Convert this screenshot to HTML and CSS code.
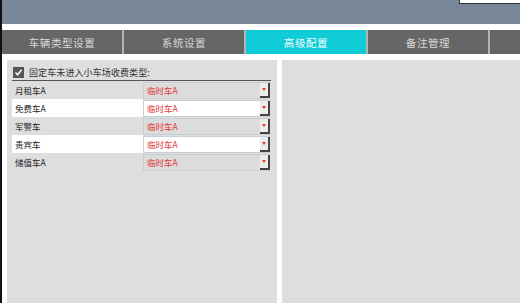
FILE: index.html
```html
<!DOCTYPE html>
<html lang="zh">
<head>
<meta charset="utf-8">
<link rel="stylesheet" href="styles.css">
</head>
<body>
<div class="app">
  <div class="header"><div class="topbox"></div></div>
  <div class="tabs">
    <div class="tab">车辆类型设置</div>
    <div class="tab">系统设置</div>
    <div class="tab active">高级配置</div>
    <div class="tab">备注管理</div>
    <div class="tab"></div>
  </div>
  <div class="content">
    <div class="panel left">
      <div class="checkrow">
        <span class="checkbox"><svg width="9" height="9" viewBox="0 0 9 9"><path d="M1.5 4.6 L3.6 6.8 L7.6 1.8" fill="none" stroke="#fff" stroke-width="1.5"/></svg></span>
        <span class="checktext">固定车未进入小车场收费类型:</span>
      </div>
      <div class="table">
        <div class="row"><div class="label">月租车A</div><div class="select"><span class="val">临时车A</span><span class="btn"><i class="tri"></i></span></div></div>
        <div class="row alt"><div class="label">免费车A</div><div class="select"><span class="val">临时车A</span><span class="btn"><i class="tri"></i></span></div></div>
        <div class="row"><div class="label">军警车</div><div class="select"><span class="val">临时车A</span><span class="btn"><i class="tri"></i></span></div></div>
        <div class="row alt"><div class="label">贵宾车</div><div class="select"><span class="val">临时车A</span><span class="btn"><i class="tri"></i></span></div></div>
        <div class="row"><div class="label">储值车A</div><div class="select"><span class="val">临时车A</span><span class="btn"><i class="tri"></i></span></div></div>
      </div>
    </div>
    <div class="panel right"></div>
  </div>
</div>
</body>
</html>
```

FILE: styles.css
```css
* { box-sizing: border-box; }
html, body { margin: 0; padding: 0; background: #fff; }
body { font-family: "Noto Sans CJK SC", "Noto Sans", sans-serif; }
.app {
  width: 520px;
  height: 303px;
  border-left: 2px solid #111;
  display: flex;
  flex-direction: column;
  overflow: hidden;
}
.header {
  height: 24px;
  background: #778797;
  display: flex;
  justify-content: flex-end;
  align-items: flex-start;
}
.topbox {
  width: 61px;
  height: 4px;
  background: #fff;
  border: 1px solid #333;
  border-top: none;
  border-right: none;
}
.tabs {
  margin-top: 6px;
  height: 24px;
  background: #666;
  display: flex;
}
.tab {
  width: 122px;
  flex: none;
  border-right: 2px solid #b4b4b4;
  color: #d8d8d8;
  font-size: 10.5px;
  display: flex;
  align-items: center;
  justify-content: center;
  letter-spacing: 0.6px;
}
.tab.active { background: #10ccd6; color: #f4ffff; }
.content {
  flex: 1;
  display: flex;
  gap: 5px;
  padding: 6px 0 0 5px;
}
.panel { background: #dedede; }
.left { width: 270px; padding: 5px 5px 0 5px; }
.right { flex: 1; }
.checkrow {
  height: 14px;
  display: flex;
  align-items: center;
  gap: 5px;
  padding-left: 1px;
}
.checkbox {
  width: 11px;
  height: 11px;
  background: #555;
  display: flex;
  align-items: center;
  justify-content: center;
}
.checktext { font-size: 9px; color: #333; letter-spacing: 0.1px; }
.table {
  margin-top: 1px;
  border-top: 1px solid #555;
  width: 259px;
}
.row {
  height: 18px;
  display: flex;
  align-items: center;
}
.row.alt .label { background: #fff; }
.row.alt .select { background: #fff; }
.label {
  width: 131px;
  height: 100%;
  font-size: 8.5px;
  color: #222;
  display: flex;
  align-items: center;
  padding-left: 3px;
}
.select {
  width: 127px;
  height: 17px;
  border: 1px solid #c6ced6;
  border-right: none;
  display: flex;
  align-items: stretch;
  background: #dcdcdc;
}
.val {
  flex: 1;
  font-size: 8.5px;
  color: #e53935;
  display: flex;
  align-items: center;
  padding-left: 3px;
}
.btn {
  width: 10px;
  background: #ececec;
  border-right: 2px solid #444;
  border-bottom: 2px solid #444;
  display: flex;
  align-items: center;
  justify-content: center;
}
.tri {
  width: 0;
  height: 0;
  border-left: 2.5px solid transparent;
  border-right: 2.5px solid transparent;
  border-top: 3px solid #e53935;
}
```
